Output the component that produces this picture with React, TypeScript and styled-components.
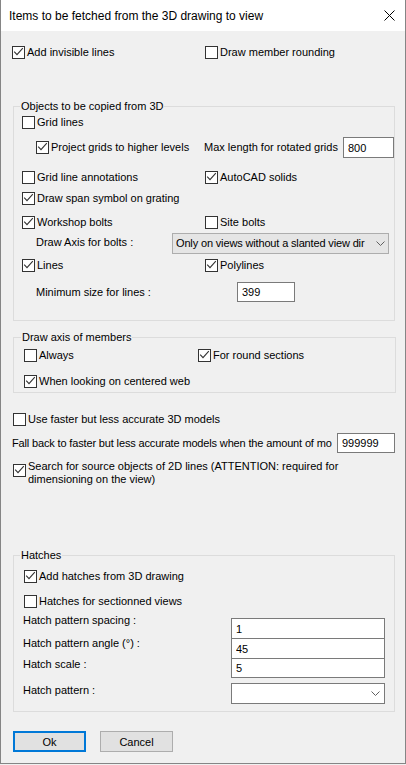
import React from 'react';
import styled, { createGlobalStyle } from 'styled-components';

const GlobalStyle = createGlobalStyle`
  html, body { margin: 0; padding: 0; background: #f0f0f0; }
  body { font-family: "Liberation Sans", Arial, sans-serif; font-size: 11px; color: #000; }
  * { box-sizing: border-box; }
`;

const Window = styled.div`
  width: 406px;
  height: 764px;
  border: 1px solid #858585;
  border-top: none;
  background: #f0f0f0;
  display: flex;
  flex-direction: column;
`;

const TitleBar = styled.div`
  height: 31px;
  flex: none;
  background: #fff;
  display: flex;
  align-items: center;
  justify-content: space-between;
  padding: 0 10px 0 8px;
`;

const TitleText = styled.span`
  font-size: 12px;
  color: #000;
  line-height: 16px;
`;

const Body = styled.div`
  flex: 1;
  display: flex;
  flex-direction: column;
  padding-left: 11px;
`;

const Row = styled.div<{ $mt: number; $pl?: number; $h?: number; $align?: string }>`
  display: flex;
  align-items: ${(p) => p.$align ?? 'center'};
  margin-top: ${(p) => p.$mt}px;
  padding-left: ${(p) => p.$pl ?? 0}px;
  height: ${(p) => (p.$h ? `${p.$h}px` : 'auto')};
`;

const Cell = styled.div<{ $w?: number }>`
  display: flex;
  align-items: center;
  flex: none;
  width: ${(p) => (p.$w ? `${p.$w}px` : 'auto')};
`;

const Box = styled.span<{ $mt?: number }>`
  width: 13px;
  height: 13px;
  flex: none;
  border: 1px solid #333;
  background: #fff;
  display: inline-flex;
  margin-top: ${(p) => p.$mt ?? 0}px;
`;

const CheckText = styled.span`
  margin-left: 2px;
  line-height: 13px;
  white-space: nowrap;
`;

const MultiText = styled.span`
  margin-left: 2px;
  line-height: 13px;
`;

const Label = styled.span<{ $dy?: number }>`
  line-height: 13px;
  white-space: nowrap;
  position: relative;
  top: ${(p) => p.$dy ?? 0}px;
`;

const ClipLabel = styled.span<{ $w: number }>`
  width: ${(p) => p.$w}px;
  flex: none;
  overflow: hidden;
  white-space: nowrap;
  line-height: 13px;
  letter-spacing: -0.15px;
`;

const LabelCell = styled.div<{ $w: number }>`
  width: ${(p) => p.$w}px;
  flex: none;
  display: flex;
`;

const TextInput = styled.input<{ $w: number; $h: number; $mt?: number; $ml?: string }>`
  width: ${(p) => p.$w}px;
  height: ${(p) => p.$h}px;
  margin: ${(p) => p.$mt ?? 0}px 0 0 ${(p) => p.$ml ?? '0'};
  flex: none;
  border: 1px solid #7a7a7a;
  background: #fff;
  padding: 0 0 0 4px;
  font: inherit;
  color: #000;
  outline: none;
`;

const Combo = styled.div<{ $w: number; $flat?: boolean }>`
  width: ${(p) => p.$w}px;
  height: 21px;
  flex: none;
  display: flex;
  align-items: center;
  border: 1px solid ${(p) => (p.$flat ? '#7a7a7a' : '#adadad')};
  background: ${(p) => (p.$flat ? '#fff' : '#e5e5e5')};
  padding: 0 ${(p) => (p.$flat ? 4 : 3)}px 0 3px;
`;

const ComboText = styled.span`
  flex: 1;
  overflow: hidden;
  white-space: nowrap;
  line-height: 13px;
  margin-right: 6px;
  letter-spacing: -0.15px;
`;

const Group = styled.fieldset<{ $w: number; $mt: number; $pb: number }>`
  margin: ${(p) => p.$mt}px 0 0 1px;
  padding: 0 0 ${(p) => p.$pb}px 0;
  width: ${(p) => p.$w}px;
  min-width: 0;
  border: 1px solid #dcdcdc;
  flex: none;
`;

const Legend = styled.legend<{ $ml: number }>`
  margin-left: ${(p) => p.$ml}px;
  padding: 0 1px;
  line-height: 13px;
  font-size: 11px;
`;

const Button = styled.button<{ $default?: boolean }>`
  width: 73px;
  height: 21px;
  flex: none;
  font: inherit;
  color: #000;
  background: #e1e1e1;
  border: ${(p) => (p.$default ? '2px solid #0078d7' : '1px solid #adadad')};
  padding: 0;
`;

const ButtonRow = styled.div`
  display: flex;
  gap: 14px;
  margin-top: 19px;
  padding-left: 1px;
`;

const Chevron = () => (
  <svg width="9" height="5" viewBox="0 0 9 5">
    <polyline points="0.5,0.5 4.5,4.5 8.5,0.5" fill="none" stroke="#606060" strokeWidth="1" />
  </svg>
);

const CloseIcon = () => (
  <svg width="11" height="11" viewBox="0 0 11 11">
    <path d="M0.5 0.5 L10.5 10.5 M10.5 0.5 L0.5 10.5" stroke="#000" strokeWidth="1" />
  </svg>
);

const Check = ({ checked, label, mt }: { checked?: boolean; label: React.ReactNode; mt?: number }) => (
  <>
    <Box $mt={mt}>
      {checked && (
        <svg width="11" height="11" viewBox="0 0 11 11">
          <polyline points="1.2,4.6 4,7.6 9.8,1.2" fill="none" stroke="#333" strokeWidth="1.1" />
        </svg>
      )}
    </Box>
    {typeof label === 'string' ? <CheckText>{label}</CheckText> : label}
  </>
);

export default function App() {
  return (
    <>
      <GlobalStyle />
      <Window>
        <TitleBar>
          <TitleText>Items to be fetched from the 3D drawing to view</TitleText>
          <CloseIcon />
        </TitleBar>
        <Body>
          <Row $mt={15} $h={13}>
            <Cell $w={193}>
              <Check checked label="Add invisible lines" />
            </Cell>
            <Cell>
              <Check label="Draw member rounding" />
            </Cell>
          </Row>

          <Group $w={382} $mt={41} $pb={18}>
            <Legend $ml={6}>Objects to be copied from 3D</Legend>
            <Row $mt={3} $pl={8} $h={13}>
              <Check label="Grid lines" />
            </Row>
            <Row $mt={8} $pl={22} $h={21}>
              <Cell $w={168}>
                <Check checked label="Project grids to higher levels" />
              </Cell>
              <Label>Max length for rotated grids</Label>
              <TextInput $w={51} $h={21} $ml="auto" readOnly defaultValue="800" />
            </Row>
            <Row $mt={13} $pl={8} $h={13}>
              <Cell $w={183}>
                <Check label="Grid line annotations" />
              </Cell>
              <Cell>
                <Check checked label="AutoCAD solids" />
              </Cell>
            </Row>
            <Row $mt={8} $pl={8} $h={13}>
              <Check checked label="Draw span symbol on grating" />
            </Row>
            <Row $mt={11} $pl={8} $h={13}>
              <Cell $w={183}>
                <Check checked label="Workshop bolts" />
              </Cell>
              <Cell>
                <Check label="Site bolts" />
              </Cell>
            </Row>
            <Row $mt={4} $pl={22} $h={21}>
              <LabelCell $w={136}>
                <Label $dy={-1}>Draw Axis for bolts :</Label>
              </LabelCell>
              <Combo $w={217}>
                <ComboText>Only on views without a slanted view dir</ComboText>
                <Chevron />
              </Combo>
            </Row>
            <Row $mt={5} $pl={8} $h={13}>
              <Cell $w={183}>
                <Check checked label="Lines" />
              </Cell>
              <Cell>
                <Check checked label="Polylines" />
              </Cell>
            </Row>
            <Row $mt={10} $pl={22} $h={20}>
              <LabelCell $w={201}>
                <Label>Minimum size for lines :</Label>
              </LabelCell>
              <TextInput $w={58} $h={20} readOnly defaultValue="399" />
            </Row>
          </Group>

          <Group $w={383} $mt={10} $pb={4}>
            <Legend $ml={7}>Draw axis of members</Legend>
            <Row $mt={5} $pl={10} $h={13}>
              <Cell $w={174}>
                <Check label="Always" />
              </Cell>
              <Cell>
                <Check checked label="For round sections" />
              </Cell>
            </Row>
            <Row $mt={13} $pl={10} $h={13}>
              <Check checked label="When looking on centered web" />
            </Row>
          </Group>

          <Row $mt={20} $pl={1} $h={13}>
            <Check label="Use faster but less accurate 3D models" />
          </Row>
          <Row $mt={7} $h={20}>
            <ClipLabel $w={325}>Fall back to faster but less accurate models when the amount of mo</ClipLabel>
            <TextInput $w={58} $h={20} readOnly defaultValue="999999" />
          </Row>
          <Row $mt={7} $pl={1} $align="flex-start">
            <Check
              checked
              mt={4}
              label={
                <MultiText>
                  Search for source objects of 2D lines (ATTENTION: required for
                  <br />
                  dimensioning on the view)
                </MultiText>
              }
            />
          </Row>

          <Group $w={382} $mt={63} $pb={7}>
            <Legend $ml={6}>Hatches</Legend>
            <Row $mt={8} $pl={10} $h={13}>
              <Check checked label="Add hatches from 3D drawing" />
            </Row>
            <Row $mt={12} $pl={10} $h={13}>
              <Check label="Hatches for sectionned views" />
            </Row>
            <Row $mt={10} $pl={9} $align="flex-start">
              <LabelCell $w={208}>
                <Label $dy={-4}>Hatch pattern spacing :</Label>
              </LabelCell>
              <TextInput $w={154} $h={21} readOnly defaultValue="1" />
            </Row>
            <Row $mt={-1} $pl={9} $align="flex-start">
              <LabelCell $w={208}>
                <Label $dy={-1}>Hatch pattern angle (°) :</Label>
              </LabelCell>
              <TextInput $w={154} $h={21} readOnly defaultValue="45" />
            </Row>
            <Row $mt={-1} $pl={9} $align="flex-start">
              <LabelCell $w={208}>
                <Label>Hatch scale :</Label>
              </LabelCell>
              <TextInput $w={154} $h={20} readOnly defaultValue="5" />
            </Row>
            <Row $mt={5} $pl={9} $align="flex-start">
              <LabelCell $w={208}>
                <Label $dy={1}>Hatch pattern :</Label>
              </LabelCell>
              <Combo $w={154} $flat>
                <ComboText></ComboText>
                <Chevron />
              </Combo>
            </Row>
          </Group>

          <ButtonRow>
            <Button $default>Ok</Button>
            <Button>Cancel</Button>
          </ButtonRow>
        </Body>
      </Window>
    </>
  );
}
